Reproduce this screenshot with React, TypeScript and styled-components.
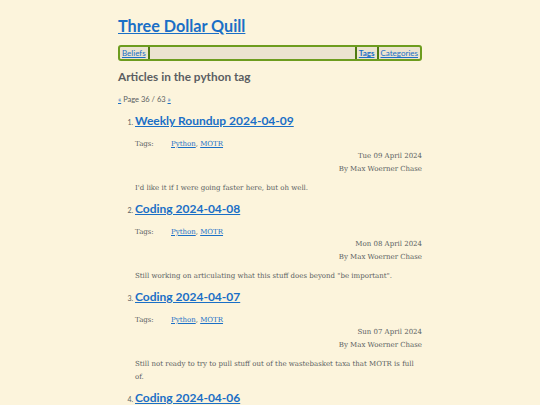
import React from 'react'
import styled, { createGlobalStyle } from 'styled-components'

const GlobalStyle = createGlobalStyle`
  html, body {
    margin: 0;
    padding: 0;
    background: #fcf4dc;
  }
  body {
    font-family: 'DejaVu Serif', serif;
    color: #4a4a4a;
  }
`

const Page = styled.main`
  width: 304px;
  margin: 0 auto;
  padding-top: 15px;
`

const SiteTitle = styled.h1`
  margin: 0;
  font-family: Lato, 'Noto Sans', sans-serif;
  font-size: 16.2px;
  line-height: 22px;
  font-weight: 700;
  a {
    color: #1a6fc6;
  }
`

const Nav = styled.nav`
  margin-top: 8px;
  display: flex;
  align-items: stretch;
  height: 12px;
  background: #ebe3cf;
  border: 2px solid #6d9c1e;
  border-radius: 3px;
  font-family: Lato, 'Noto Sans', sans-serif;
  font-size: 8px;
  line-height: 12px;
`

const Spacer = styled.div`
  flex: 1;
`

const NavItem = styled.a<{ $current?: boolean; $sep?: 'left' | 'right' | 'both' }>`
  padding: 0 2px;
  color: #1a6fc6;
  font-weight: ${(p) => (p.$current ? 700 : 400)};
  border-left: ${(p) => (p.$sep === 'left' || p.$sep === 'both' ? '2px solid #4f7a12' : 'none')};
  border-right: ${(p) => (p.$sep === 'right' || p.$sep === 'both' ? '2px solid #4f7a12' : 'none')};
`

const PageHeading = styled.h2`
  margin: 8px 0 0;
  font-family: Lato, 'Noto Sans', sans-serif;
  font-size: 11.8px;
  line-height: 16px;
  font-weight: 700;
  color: #5a5e62;
`

const Pager = styled.p`
  margin: 10px 0 0;
  font-family: Lato, 'Noto Sans', sans-serif;
  font-size: 7.5px;
  line-height: 10px;
  color: #5a5e62;
  a {
    color: #1a6fc6;
  }
`

const ArticleList = styled.ol`
  margin: 8px 0 0;
  padding-left: 17px;
  font-family: Lato, 'Noto Sans', sans-serif;
  font-size: 7px;
  color: #5a5e62;
`

const Article = styled.li`
  margin-bottom: 6px;
`

const ArticleTitle = styled.a`
  font-family: Lato, 'Noto Sans', sans-serif;
  font-size: 12px;
  line-height: 16px;
  font-weight: 700;
  color: #1a6fc6;
`

const TagRow = styled.div`
  margin-top: 10px;
  display: flex;
  font-family: 'DejaVu Serif', serif;
  font-size: 7px;
  line-height: 10px;
  color: #5a5e62;
  a {
    color: #1a6fc6;
  }
`

const TagLabel = styled.span`
  width: 36px;
`

const Meta = styled.div`
  margin-top: 1px;
  text-align: right;
  font-family: 'DejaVu Serif', serif;
  font-size: 7px;
  line-height: 13px;
  color: #5a5e62;
`

const Summary = styled.p`
  margin: 6px 0 0;
  font-family: 'DejaVu Serif', serif;
  font-size: 7px;
  line-height: 13px;
  color: #5a5e62;
`

const articles = [
  {
    title: 'Weekly Roundup 2024-04-09',
    date: 'Tue 09 April 2024',
    summary: "I'd like it if I were going faster here, but oh well.",
  },
  {
    title: 'Coding 2024-04-08',
    date: 'Mon 08 April 2024',
    summary: 'Still working on articulating what this stuff does beyond "be important".',
  },
  {
    title: 'Coding 2024-04-07',
    date: 'Sun 07 April 2024',
    summary: 'Still not ready to try to pull stuff out of the wastebasket taxa that MOTR is full of.',
  },
  {
    title: 'Coding 2024-04-06',
    date: 'Sat 06 April 2024',
    summary: 'More thinking.',
  },
]

export default function App() {
  return (
    <>
      <GlobalStyle />
      <Page>
        <SiteTitle>
          <a href="#">Three Dollar Quill</a>
        </SiteTitle>
        <Nav>
          <NavItem href="#" $sep="right">Beliefs</NavItem>
          <Spacer />
          <NavItem href="#" $sep="both" $current>Tags</NavItem>
          <NavItem href="#">Categories</NavItem>
        </Nav>
        <PageHeading>Articles in the python tag</PageHeading>
        <Pager>
          <a href="#">«</a> Page 36 / 63 <a href="#">»</a>
        </Pager>
        <ArticleList>
          {articles.map((a) => (
            <Article key={a.title}>
              <ArticleTitle href="#">{a.title}</ArticleTitle>
              <TagRow>
                <TagLabel>Tags:</TagLabel>
                <span>
                  <a href="#">Python</a>, <a href="#">MOTR</a>
                </span>
              </TagRow>
              <Meta>
                <div>{a.date}</div>
                <div>By Max Woerner Chase</div>
              </Meta>
              <Summary>{a.summary}</Summary>
            </Article>
          ))}
        </ArticleList>
      </Page>
    </>
  )
}
